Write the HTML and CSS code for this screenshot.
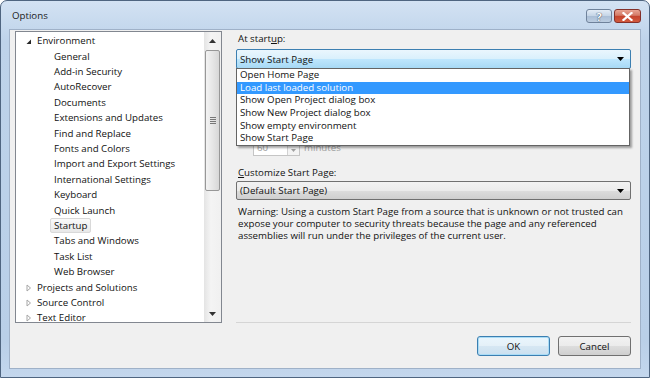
FILE: index.html
```html
<!DOCTYPE html>
<html lang="en">
<head>
  <meta charset="UTF-8">
  <title>Options</title>
  <link rel="stylesheet" href="styles.css">
</head>
<body>
  <div class="window">
    <div class="titlebar">
      <span class="title">Options</span>
      <div class="caption-btns">
        <span class="cap help">?</span>
        <span class="cap close">
          <svg width="11" height="9" viewBox="0 0 11 9"><path d="M1.5 1 L9.5 8 M9.5 1 L1.5 8" stroke="#fff" stroke-width="2.2" stroke-linecap="square"/></svg>
        </span>
      </div>
    </div>

    <div class="client">
      <div class="main">
        <div class="tree">
          <ul class="tree-items">
            <li class="node"><span class="exp"><svg width="6" height="6" viewBox="0 0 6 6"><path d="M5 0.5 L5 5 L0.5 5 Z" fill="#262626"/></svg></span>Environment</li>
            <li class="leaf">General</li>
            <li class="leaf">Add-in Security</li>
            <li class="leaf">AutoRecover</li>
            <li class="leaf">Documents</li>
            <li class="leaf">Extensions and Updates</li>
            <li class="leaf">Find and Replace</li>
            <li class="leaf">Fonts and Colors</li>
            <li class="leaf">Import and Export Settings</li>
            <li class="leaf">International Settings</li>
            <li class="leaf">Keyboard</li>
            <li class="leaf">Quick Launch</li>
            <li class="leaf"><span class="sel">Startup</span></li>
            <li class="leaf">Tabs and Windows</li>
            <li class="leaf">Task List</li>
            <li class="leaf">Web Browser</li>
            <li class="node"><span class="exp"><svg width="6" height="8" viewBox="0 0 6 8"><path d="M1 1 L4.5 4 L1 7 Z" fill="none" stroke="#a6a6a6"/></svg></span>Projects and Solutions</li>
            <li class="node"><span class="exp"><svg width="6" height="8" viewBox="0 0 6 8"><path d="M1 1 L4.5 4 L1 7 Z" fill="none" stroke="#a6a6a6"/></svg></span>Source Control</li>
            <li class="node"><span class="exp"><svg width="6" height="8" viewBox="0 0 6 8"><path d="M1 1 L4.5 4 L1 7 Z" fill="none" stroke="#a6a6a6"/></svg></span>Text Editor</li>
          </ul>
          <div class="vscroll">
            <div class="sb-arrow"><svg width="7" height="4" viewBox="0 0 7 4"><path d="M0 4 L3.5 0 L7 4 Z" fill="#333"/></svg></div>
            <div class="sb-track">
              <div class="sb-thumb"><span class="grip"></span></div>
            </div>
            <div class="sb-arrow"><svg width="7" height="4" viewBox="0 0 7 4"><path d="M0 0 L7 0 L3.5 4 Z" fill="#333"/></svg></div>
          </div>
        </div>

        <div class="pane">
          <div class="field-label">At start<u>u</u>p:</div>
          <div class="combo-wrap">
            <div class="combo open">
              <span>Show Start Page</span>
              <svg width="7" height="4" viewBox="0 0 7 4"><path d="M0 0 L7 0 L3.5 4 Z" fill="#000"/></svg>
            </div>
            <ul class="dropdown">
              <li>Open Home Page</li>
              <li class="hl">Load last loaded solution</li>
              <li>Show Open Project dialog box</li>
              <li>Show New Project dialog box</li>
              <li>Show empty environment</li>
              <li>Show Start Page</li>
            </ul>
          </div>
          <div class="spin-row">
            <div class="spin">
              <span class="spin-val">60</span>
              <span class="spin-btn"><svg width="5" height="3" viewBox="0 0 5 3"><path d="M0 0 L5 0 L2.5 3 Z" fill="#a0a0a0"/></svg></span>
            </div>
            <span class="muted">minutes</span>
          </div>
          <div class="field-label second"><u>C</u>ustomize Start Page:</div>
          <div class="combo">
            <span>(Default Start Page)</span>
            <svg width="7" height="4" viewBox="0 0 7 4"><path d="M0 0 L7 0 L3.5 4 Z" fill="#000"/></svg>
          </div>
          <p class="warning">Warning: Using a custom Start Page from a source that is unknown or not trusted can expose your computer to security threats because the page and any referenced assemblies will run under the privileges of the current user.</p>
          <div class="separator"></div>
        </div>
      </div>

      <div class="footer">
        <button class="btn default">OK</button>
        <button class="btn">Cancel</button>
      </div>
    </div>
  </div>
</body>
</html>
```
FILE: styles.css
```css
* {
  box-sizing: border-box;
}
body {
  margin: 0;
  font-family: "Open Sans", sans-serif;
  font-size: 9.7px;
  color: #111;
  background: #fff;
}
ul {
  margin: 0;
  padding: 0;
  list-style: none;
}

/* window frame */
.window {
  width: 650px;
  height: 378px;
  border: 1px solid #4f6580;
  border-radius: 7px 7px 0 0;
  padding: 0 8px 8px 8px;
  background: linear-gradient(#d3e2f3, #bed3ea 40px, #b9cfe8 90%, #c4d7ed);
  display: flex;
  flex-direction: column;
}
.titlebar {
  height: 28px;
  display: flex;
  justify-content: space-between;
  align-items: flex-start;
}
.title {
  margin: 8px 0 0 3px;
  line-height: 14px;
  color: #1a1a1a;
}
.caption-btns {
  display: flex;
  gap: 2px;
  margin-top: 8px;
}
.cap {
  height: 14px;
  border-radius: 3px;
  display: flex;
  align-items: center;
  justify-content: center;
}
.help {
  width: 26px;
  border: 1px solid #6f829b;
  background: linear-gradient(#e3ecf6, #c4d4e6 50%, #aabed6 51%, #bccde1);
  color: #fff;
  font-weight: bold;
  font-size: 11px;
  text-shadow: 0 0 1px #39475a, 0 0 1px #39475a;
}
.close {
  width: 27px;
  border: 1px solid #84302a;
  background: linear-gradient(#e8a493, #d47a66 45%, #c4432d 50%, #d25a3e);
}

/* client area */
.client {
  flex: 1;
  background: #f0f0f0;
  border: 1px solid #9fb1c8;
  padding: 1px 9px 0 5px;
}
.main {
  display: flex;
  height: 292px;
}

/* tree */
.tree {
  width: 207px;
  border: 1px solid #828790;
  background: #fff;
  display: flex;
}
.tree-items {
  flex: 1;
  overflow: hidden;
  padding-top: 1.3px;
}
.tree-items li {
  height: 15.4px;
  line-height: 15.4px;
  white-space: nowrap;
}
.node {
  padding-left: 10px;
}
.exp {
  display: inline-block;
  width: 11px;
}
.exp svg {
  vertical-align: -1px;
}
.leaf {
  padding-left: 38px;
}
.sel {
  display: inline-block;
  margin-left: -4px;
  padding: 0 3px;
  line-height: 13.4px;
  border: 1px solid #d9d9d9;
  border-radius: 2px;
  background: linear-gradient(#fafafa, #e8e8e8);
}
.vscroll {
  width: 17px;
  display: flex;
  flex-direction: column;
  background: linear-gradient(to right, #e4e4e4, #f4f4f4 40%, #f0f0f0);
}
.sb-arrow {
  height: 17px;
  display: flex;
  align-items: center;
  justify-content: center;
}
.sb-track {
  flex: 1;
  padding: 1px 1px;
}
.sb-thumb {
  height: 141px;
  border: 1px solid #979797;
  border-radius: 2px;
  background: linear-gradient(to right, #f3f3f3, #e6e6e6 50%, #d7d7d7);
  display: flex;
  align-items: center;
  justify-content: center;
}
.grip {
  width: 6px;
  height: 7px;
  background: repeating-linear-gradient(#777 0 1px, transparent 1px 2px);
}

/* right pane */
.pane {
  flex: 1;
  margin-left: 14px;
  display: flex;
  flex-direction: column;
}
.field-label {
  margin-top: 1px;
  line-height: 14px;
  padding-left: 2px;
}
.field-label.second {
  margin-top: 10px;
}
.combo-wrap {
  position: relative;
  margin-top: 3px;
}
.combo {
  height: 19px;
  border: 1px solid #707070;
  border-radius: 2px;
  padding: 0 6px 0 3px;
  margin-top: 1px;
  display: flex;
  align-items: center;
  justify-content: space-between;
  background: linear-gradient(#f2f2f2, #ebebeb 50%, #dddddd 51%, #cfcfcf);
}
.combo.open {
  height: 20px;
  margin-top: 0;
  border-color: #3c7fb1;
  background: linear-gradient(#eaf6fd, #d9f0fc 50%, #bee6fd 51%, #a7d9f5);
}
.dropdown {
  position: absolute;
  top: 19px;
  left: 0;
  width: 394px;
  border: 1px solid #646464;
  background: #fff;
  box-shadow: 2px 2px 2px rgba(0, 0, 0, 0.35);
  z-index: 2;
}
.dropdown li {
  height: 12.7px;
  line-height: 12.7px;
  padding-left: 3px;
  white-space: nowrap;
}
.dropdown li.hl {
  background: #3399ff;
  color: #fff;
}
.spin-row {
  margin-top: 70px;
  padding-left: 17px;
  display: flex;
  align-items: center;
  gap: 4px;
  height: 17px;
}
.spin {
  width: 47px;
  height: 17px;
  border: 1px solid #c5c5c5;
  display: flex;
  background: #fff;
}
.spin-val {
  flex: 1;
  color: #a0a0a0;
  padding-left: 3px;
  line-height: 15px;
}
.spin-btn {
  width: 12px;
  border-left: 1px solid #d2d2d2;
  background: #f4f4f4;
  display: flex;
  align-items: flex-end;
  justify-content: center;
  padding-bottom: 3px;
}
.muted {
  color: #a0a0a0;
}
.warning {
  margin: 6px 0 0 0;
  padding-left: 2px;
  line-height: 12px;
}
.separator {
  margin-top: auto;
  height: 1px;
  background: #d5d5d5;
}

/* buttons */
.footer {
  margin-top: 13px;
  display: flex;
  justify-content: flex-end;
  gap: 8px;
}
.btn {
  width: 73px;
  height: 20px;
  font-family: "Open Sans", sans-serif;
  font-size: 9.7px;
  color: #111;
  border: 1px solid #707070;
  border-radius: 3px;
  background: linear-gradient(#f2f2f2, #ebebeb 50%, #dddddd 51%, #cfcfcf);
  padding: 0;
}
.btn.default {
  border-color: #3c7fb1;
  box-shadow: inset 0 0 0 1px #a9dcf6;
  background: linear-gradient(#eaf6fd, #e4f0f8 50%, #d6e7f3 51%, #cbe0ef);
}
```
